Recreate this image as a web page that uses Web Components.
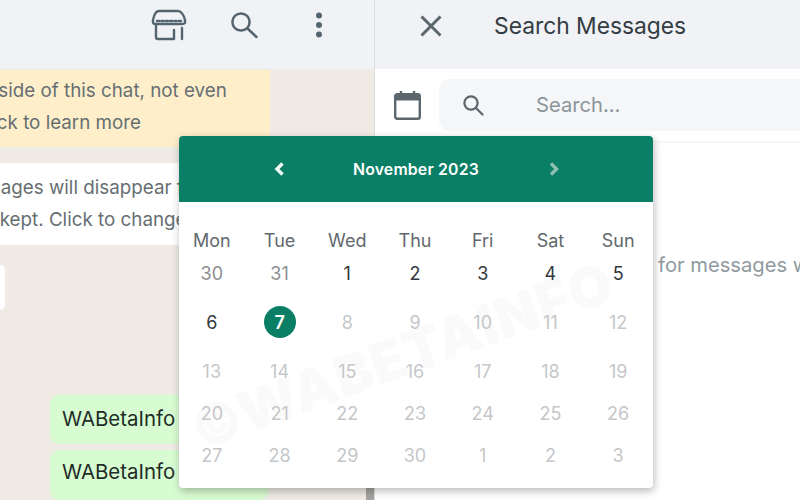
<!DOCTYPE html>
<html>
<head>
<meta charset="utf-8">
<style>
	html, body { margin: 0; height: 500px; overflow: hidden; background: #fff; font-family: Inter, 'Liberation Sans', sans-serif; }
</style>
</head>
<body>
<wa-app>
	<chat-pane slot="left"></chat-pane>
	<search-pane slot="right"></search-pane>
	<date-picker slot="overlay" month="November 2023"></date-picker>
</wa-app>

<script>
class WaApp extends HTMLElement {
	connectedCallback() {
		this.attachShadow({ mode: 'open' })
		this.shadowRoot.innerHTML = `
		<style>
			:host { display: grid; grid-template-columns: 375px 425px; width: 800px; height: 500px; position: relative; overflow: hidden; }
			.overlay { position: absolute; left: 179px; top: 136px; }
		</style>
		<slot name="left"></slot>
		<slot name="right"></slot>
		<div class="overlay"><slot name="overlay"></slot></div>
		`;
	}
}

class ChatPane extends HTMLElement {
	connectedCallback() {
		this.attachShadow({ mode: 'open' })
		this.shadowRoot.innerHTML = `
		<style>
			:host { display: flex; flex-direction: column; height: 500px; border-right: 1px solid #dcdfe2; box-sizing: border-box; overflow: hidden; position: relative; }
			.head { height: 69px; flex: none; background: #f0f2f5; display: flex; align-items: center; justify-content: flex-end; padding: 0 51px 0 0; box-sizing: border-box; }
			.head svg { display: block; margin-top: -19px; }
			.body { flex: 1; background: #efebe4; display: flex; flex-direction: column; align-items: flex-start; }
			.notice { box-sizing: border-box; font-size: 18.8px; line-height: 32px; color: #666e72; white-space: nowrap; overflow: hidden; }
			.yellow { width: 270px; height: 77px; padding-top: 5px; background: #feefca; margin-top: 1px; border-radius: 0 0 4px 0; }
			.white { width: 200px; height: 82px; padding-top: 9px; background: #fff; margin-top: 16px; }
			.stub { width: 5px; height: 45px; margin-top: 20px; background: #fff; border-radius: 0 6px 6px 0; }
			.bubble { box-sizing: border-box; width: 218px; margin-left: 50px; background: #d8fcd2; border-radius: 9px; font-size: 20.4px; color: #1f2c27; padding: 11px 12px 0; flex: none; }
			.b1 { height: 49px; margin-top: 85px; }
			.b2 { height: 50px; margin-top: 6px; padding-top: 9px; }
			.scroll { position: absolute; right: 0; top: 488px; width: 8px; height: 12px; background: #a5a4a1; }
		</style>
		<div class="head">
			<svg width="36" height="32" viewBox="0 0 36 32" fill="none" stroke="#54656f" stroke-width="2.4" stroke-linecap="round" stroke-linejoin="round">
				<path d="M8 2h19c3 0 6 4 7 9v3c-1 1-1 1-3 1H5c-2 0-3 0-3-2v-2C3 6 5 2 8 2z"/>
				<path d="M5 16v12c0 1 1 2 2 2h16v-9"/>
				<path d="M31 19v11"/>
				<path d="M6 12h24" stroke-dasharray="2 2.4" stroke-width="2.6"/>
			</svg>
			<svg width="30" height="30" viewBox="0 0 30 30" fill="none" stroke="#54656f" stroke-width="2.5" stroke-linecap="round" style="margin-left:42px">
				<circle cx="12" cy="12" r="8.6"/>
				<path d="M18.5 18.5 27.5 27"/>
			</svg>
			<svg width="8" height="26" viewBox="0 0 8 26" fill="#54656f" style="margin-left:56px">
				<circle cx="4" cy="3.5" r="3"/><circle cx="4" cy="13" r="3"/><circle cx="4" cy="22.5" r="3"/>
			</svg>
		</div>
		<div class="body">
			<div class="notice yellow">
				<div style="margin-left:-30px">outside of this chat, not even</div>
				<div style="margin-left:-26px">Click to learn more</div>
			</div>
			<div class="notice white">
				<div style="margin-left:-47px">Messages will disappear from</div>
				<div style="margin-left:-28px">be kept. Click to change</div>
			</div>
			<div class="stub"></div>
			<div class="bubble b1">WABetaInfo</div>
			<div class="bubble b2">WABetaInfo</div>
		</div>
		<div class="scroll"></div>
		`;
	}
}

class SearchPane extends HTMLElement {
	connectedCallback() {
		this.attachShadow({ mode: 'open' })
		this.shadowRoot.innerHTML = `
		<style>
			:host { display: flex; flex-direction: column; height: 500px; background: #fff; overflow: hidden; }
			.head { height: 69px; flex: none; background: #f0f2f5; display: flex; align-items: center; padding: 0 0 18px 45px; box-sizing: border-box; gap: 52px; font-size: 22.8px; color: #333c42; white-space: nowrap; }
			.head svg { flex: none; }
			.bar { height: 74px; flex: none; display: flex; align-items: center; padding: 0 0 0 19px; box-sizing: border-box; gap: 18px; border-bottom: 2px solid #f5f6f6; }
			.pill { flex: 1; height: 52px; margin-top: -1px; background: #f5f6f7; border-radius: 11px 0 0 11px; display: flex; align-items: center; padding-left: 23px; gap: 52px; font-size: 20.2px; color: #8a9499; }
			.hint { padding: 109px 0 0 283px; font-size: 20.2px; line-height: 26px; color: #8f9a9f; white-space: nowrap; }
		</style>
		<div class="head">
			<svg width="22" height="22" viewBox="0 0 22 22" fill="none" stroke="#5c676d" stroke-width="3"><path d="M1.5 1.5l19 19M20.5 1.5l-19 19"/></svg>
			<span>Search Messages</span>
		</div>
		<div class="bar">
			<svg width="27" height="30" viewBox="0 0 27 30" fill="none" style="flex:none">
				<rect x="1.2" y="4.2" width="24.6" height="24.6" rx="2" stroke="#5c676d" stroke-width="2.4"/>
				<rect x="1" y="4" width="25" height="6.5" fill="#5c676d"/>
				<path d="M7 1v4M20 1v4" stroke="#5c676d" stroke-width="2.4"/>
			</svg>
			<div class="pill">
				<svg width="22" height="22" viewBox="0 0 22 22" fill="none" stroke="#5c676d" stroke-width="2.2" stroke-linecap="round" style="flex:none">
					<circle cx="9" cy="9" r="6.6"/><path d="M14 14l6.5 6.5"/>
				</svg>
				<span>Search...</span>
			</div>
		</div>
		<div class="hint">for messages with</div>
		`;
	}
}

class CalDay extends HTMLElement {
	connectedCallback() {
		this.attachShadow({ mode: 'open' })
		this.shadowRoot.innerHTML = `
		<style>
			:host { display: flex; align-items: center; justify-content: center; font-size: 18px; color: #c5c7c9; }
			:host([kind=other]) { color: #8b8e90; }
			:host([kind=active]) { color: #33393d; }
			:host([kind=head]) { color: #62686c; font-size: 18px; }
			:host([kind=today]) { color: #fff; font-weight: 600; }
			span { display: flex; align-items: center; justify-content: center; width: 32px; height: 32px; border-radius: 50%; }
			:host([kind=today]) span { background: #0b7f66; }
		</style>
		<span><slot></slot></span>
		`;
	}
}

class DatePicker extends HTMLElement {
	connectedCallback() {
		let month = this.getAttribute('month');
		let names = ['Mon','Tue','Wed','Thu','Fri','Sat','Sun'];
		let days = [
			[30,'other'],[31,'other'],[1,'active'],[2,'active'],[3,'active'],[4,'active'],[5,'active'],
			[6,'active'],[7,'today'],[8],[9],[10],[11],[12],
			[13],[14],[15],[16],[17],[18],[19],
			[20],[21],[22],[23],[24],[25],[26],
			[27],[28],[29],[30],[1],[2],[3]
		];
		this.attachShadow({ mode: 'open' })
		this.shadowRoot.innerHTML = `
		<style>
			:host { display: block; width: 474px; height: 352px; background: #fff; border-radius: 4px; box-shadow: 1px 3px 9px rgba(0,0,0,.28); position: relative; overflow: hidden; }
			.top { height: 66px; background: #0b7f66; display: flex; align-items: center; justify-content: center; color: #fff; font-size: 15.8px; font-weight: 600; letter-spacing: .2px; position: relative; z-index: 2; }
			.top span { width: 127px; margin: 0 68px; text-align: center; white-space: nowrap; }
			.top svg { display: block; }
			.grid { display: grid; grid-template-columns: repeat(7, 1fr); grid-template-rows: 28px 38px 60px 38px 46px 38px; margin: 24px 1px 0 -1px; }
			.mark { position: absolute; left: 14px; top: 262px; font-size: 56px; font-weight: 900; letter-spacing: 1px; color: #fafafa; transform: rotate(-20deg); transform-origin: left center; white-space: nowrap; z-index: 0; }
			cal-day { position: relative; z-index: 1; }
		</style>
		<div class="top">
			<svg width="12" height="16" viewBox="0 0 12 16" fill="none" stroke="#f4fbf9" stroke-width="3.4"><path d="M9.5 2.5 4 8l5.5 5.5"/></svg>
			<span>${month}</span>
			<svg width="12" height="16" viewBox="0 0 12 16" fill="none" stroke="#8fbfb3" stroke-width="3.4"><path d="M3 2.5 8.5 8 3 13.5"/></svg>
		</div>
		<div class="mark">©WABETAINFO</div>
		<div class="grid">
			${names.map(n => `<cal-day kind="head">${n}</cal-day>`).join('')}
			${days.map(d => `<cal-day kind="${d[1] || 'off'}">${d[0]}</cal-day>`).join('')}
		</div>
		`;
	}
}

window.customElements.define('wa-app', WaApp)
window.customElements.define('chat-pane', ChatPane)
window.customElements.define('search-pane', SearchPane)
window.customElements.define('cal-day', CalDay)
window.customElements.define('date-picker', DatePicker)
</script>
</body>
</html>
